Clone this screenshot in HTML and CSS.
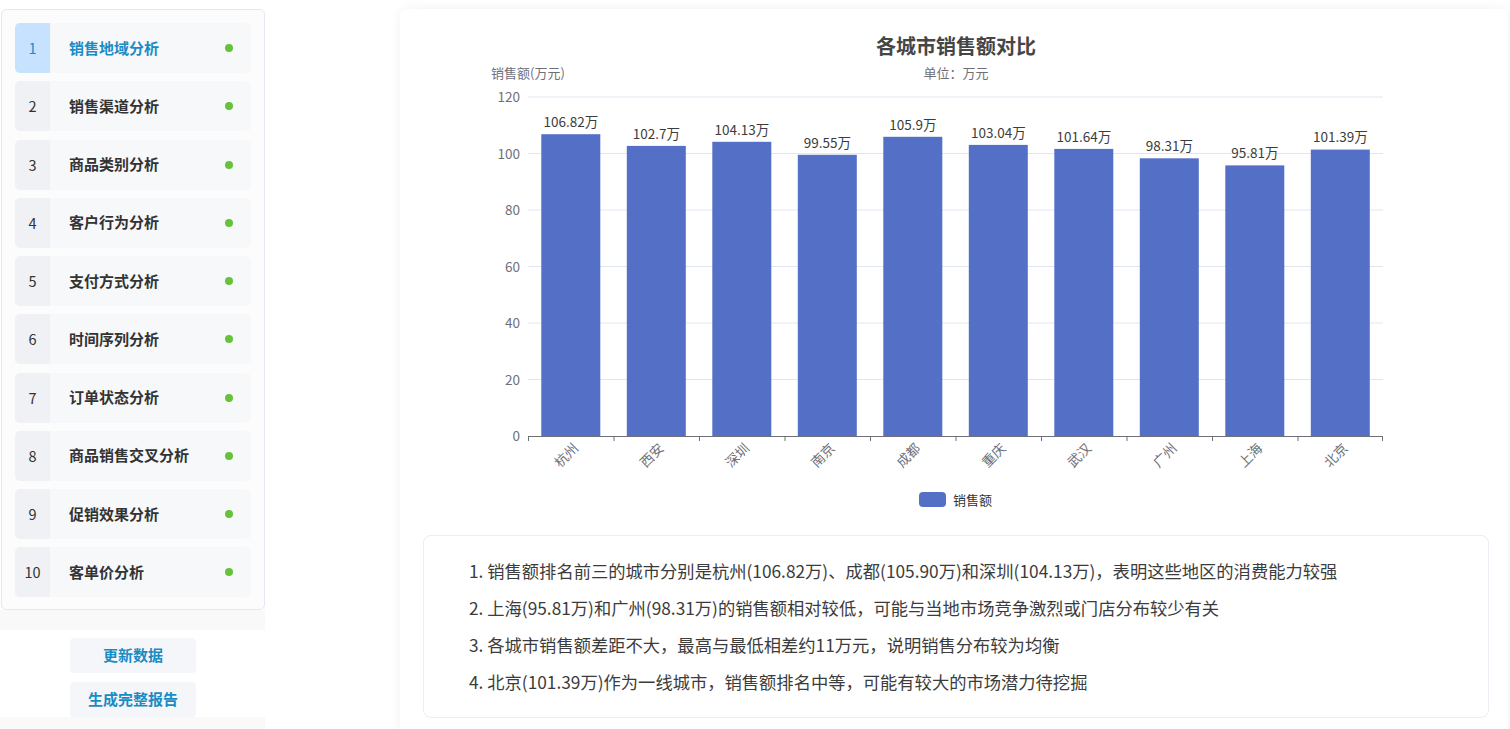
FILE: index.html
```html
<!DOCTYPE html>
<html lang="zh-CN">
<head>
<meta charset="utf-8">
<title>销售地域分析</title>
<link rel="stylesheet" href="styles.css">
</head>
<body>
<div class="page">
  <aside class="sidebar">
    <div class="nav-card">
      <div class="nav-item active"><span class="num">1</span><span class="label">销售地域分析</span><span class="dot"></span></div>
      <div class="nav-item"><span class="num">2</span><span class="label">销售渠道分析</span><span class="dot"></span></div>
      <div class="nav-item"><span class="num">3</span><span class="label">商品类别分析</span><span class="dot"></span></div>
      <div class="nav-item"><span class="num">4</span><span class="label">客户行为分析</span><span class="dot"></span></div>
      <div class="nav-item"><span class="num">5</span><span class="label">支付方式分析</span><span class="dot"></span></div>
      <div class="nav-item"><span class="num">6</span><span class="label">时间序列分析</span><span class="dot"></span></div>
      <div class="nav-item"><span class="num">7</span><span class="label">订单状态分析</span><span class="dot"></span></div>
      <div class="nav-item"><span class="num">8</span><span class="label">商品销售交叉分析</span><span class="dot"></span></div>
      <div class="nav-item"><span class="num">9</span><span class="label">促销效果分析</span><span class="dot"></span></div>
      <div class="nav-item"><span class="num">10</span><span class="label">客单价分析</span><span class="dot"></span></div>
    </div>
    <div class="side-strip"></div>
    <div class="actions">
      <button class="action-btn">更新数据</button>
      <button class="action-btn">生成完整报告</button>
    </div>
    <div class="side-strip"></div>
  </aside>

  <main class="panel">
    <svg class="chart" width="1108" height="517" viewBox="0 0 1108 517" xmlns="http://www.w3.org/2000/svg">
      <text x="556" y="36.5" class="c-title" text-anchor="middle" dominant-baseline="central">各城市销售额对比</text>
      <text x="556" y="63" class="c-sub" text-anchor="middle" dominant-baseline="central">单位：万元</text>
      <text x="128" y="63" class="c-axisname" text-anchor="middle" dominant-baseline="central">销售额(万元)</text>

      <g class="grid">
        <line x1="128" y1="88" x2="983" y2="88"/>
        <line x1="128" y1="144.5" x2="983" y2="144.5"/>
        <line x1="128" y1="201" x2="983" y2="201"/>
        <line x1="128" y1="257.5" x2="983" y2="257.5"/>
        <line x1="128" y1="314" x2="983" y2="314"/>
        <line x1="128" y1="370.5" x2="983" y2="370.5"/>
      </g>
      <g class="ylabels" text-anchor="end">
        <text x="120" y="87" dominant-baseline="central">120</text>
        <text x="120" y="143.5" dominant-baseline="central">100</text>
        <text x="120" y="200" dominant-baseline="central">80</text>
        <text x="120" y="256.5" dominant-baseline="central">60</text>
        <text x="120" y="313" dominant-baseline="central">40</text>
        <text x="120" y="369.5" dominant-baseline="central">20</text>
        <text x="120" y="426" dominant-baseline="central">0</text>
      </g>

      <g class="bars">
        <rect x="141.3" y="125.2" width="59" height="301.8"/>
        <rect x="226.8" y="136.9" width="59" height="290.1"/>
        <rect x="312.3" y="132.8" width="59" height="294.2"/>
        <rect x="397.8" y="145.8" width="59" height="281.2"/>
        <rect x="483.3" y="127.8" width="59" height="299.2"/>
        <rect x="568.8" y="135.9" width="59" height="291.1"/>
        <rect x="654.3" y="139.9" width="59" height="287.1"/>
        <rect x="739.8" y="149.3" width="59" height="277.7"/>
        <rect x="825.3" y="156.4" width="59" height="270.6"/>
        <rect x="910.8" y="140.6" width="59" height="286.4"/>
      </g>
      <g class="vlabels" text-anchor="middle">
        <text x="170.8" y="118">106.82万</text>
        <text x="256.3" y="130">102.7万</text>
        <text x="341.8" y="126">104.13万</text>
        <text x="427.3" y="139">99.55万</text>
        <text x="512.8" y="121">105.9万</text>
        <text x="598.3" y="129">103.04万</text>
        <text x="683.8" y="133">101.64万</text>
        <text x="769.3" y="142">98.31万</text>
        <text x="854.8" y="149">95.81万</text>
        <text x="940.3" y="133">101.39万</text>
      </g>

      <line class="axis" x1="128" y1="427.5" x2="983" y2="427.5"/>
      <g class="ticks">
        <line x1="128.5" y1="427" x2="128.5" y2="432"/>
        <line x1="214" y1="427" x2="214" y2="432"/>
        <line x1="299.5" y1="427" x2="299.5" y2="432"/>
        <line x1="385" y1="427" x2="385" y2="432"/>
        <line x1="470.5" y1="427" x2="470.5" y2="432"/>
        <line x1="556" y1="427" x2="556" y2="432"/>
        <line x1="641.5" y1="427" x2="641.5" y2="432"/>
        <line x1="727" y1="427" x2="727" y2="432"/>
        <line x1="812.5" y1="427" x2="812.5" y2="432"/>
        <line x1="898" y1="427" x2="898" y2="432"/>
        <line x1="982.5" y1="427" x2="982.5" y2="432"/>
      </g>
      <g class="xlabels" text-anchor="end">
        <text x="175" y="436" dominant-baseline="central" transform="rotate(-45 175 436)">杭州</text>
        <text x="260.5" y="436" dominant-baseline="central" transform="rotate(-45 260.5 436)">西安</text>
        <text x="346" y="436" dominant-baseline="central" transform="rotate(-45 346 436)">深圳</text>
        <text x="431.5" y="436" dominant-baseline="central" transform="rotate(-45 431.5 436)">南京</text>
        <text x="517" y="436" dominant-baseline="central" transform="rotate(-45 517 436)">成都</text>
        <text x="602.5" y="436" dominant-baseline="central" transform="rotate(-45 602.5 436)">重庆</text>
        <text x="688" y="436" dominant-baseline="central" transform="rotate(-45 688 436)">武汉</text>
        <text x="773.5" y="436" dominant-baseline="central" transform="rotate(-45 773.5 436)">广州</text>
        <text x="859" y="436" dominant-baseline="central" transform="rotate(-45 859 436)">上海</text>
        <text x="944.5" y="436" dominant-baseline="central" transform="rotate(-45 944.5 436)">北京</text>
      </g>

      <rect class="legend-box" x="519" y="483" width="27" height="15" rx="4"/>
      <text x="553" y="490.5" class="legend-text" dominant-baseline="central">销售额</text>
    </svg>

    <section class="insights">
      <p>1. 销售额排名前三的城市分别是杭州(106.82万)、成都(105.90万)和深圳(104.13万)，表明这些地区的消费能力较强</p>
      <p>2. 上海(95.81万)和广州(98.31万)的销售额相对较低，可能与当地市场竞争激烈或门店分布较少有关</p>
      <p>3. 各城市销售额差距不大，最高与最低相差约11万元，说明销售分布较为均衡</p>
      <p>4. 北京(101.39万)作为一线城市，销售额排名中等，可能有较大的市场潜力待挖掘</p>
    </section>
  </main>
</div>
</body>
</html>
```

FILE: styles.css
```css
* {
  box-sizing: border-box;
}

html, body {
  margin: 0;
  padding: 0;
  background: #ffffff;
  font-family: "Noto Sans CJK SC", "Noto Sans", sans-serif;
  color: #333333;
  overflow: hidden;
}

.page {
  display: grid;
  grid-template-columns: 264px 1108px;
  column-gap: 135px;
  padding-left: 1px;
  padding-top: 9px;
  height: 729px;
}

.sidebar {
  display: flex;
  flex-direction: column;
}

.nav-card {
  border: 1px solid #e6e7f0;
  border-radius: 5px;
  background: #fcfcfd;
  padding: 13px 13px 12px 13px;
  display: flex;
  flex-direction: column;
  gap: 8.25px;
}

.nav-item {
  display: flex;
  align-items: center;
  height: 50px;
  background: #f7f8fa;
  border-radius: 5px;
  overflow: hidden;
}

.nav-item .num {
  width: 35px;
  height: 100%;
  display: flex;
  align-items: center;
  justify-content: center;
  background: #eff1f5;
  font-size: 14.5px;
  color: #333333;
  padding-bottom: 1px;
}

.nav-item .label {
  flex: 1;
  padding-left: 19px;
  padding-bottom: 2px;
  font-size: 15px;
  font-weight: 600;
  color: #333333;
}

.nav-item .dot {
  width: 8px;
  height: 8px;
  border-radius: 50%;
  background: #67c23a;
  margin-right: 18px;
}

.nav-item.active .num {
  background: #c6e2ff;
  color: #1a8cc4;
}

.nav-item.active .label {
  color: #1a8cc4;
}

.side-strip {
  height: 20px;
  background: #f9f9fa;
  margin-left: -1px;
}

.actions {
  display: flex;
  flex-direction: column;
  align-items: center;
  gap: 9px;
  padding: 8px 0 0 0;
  height: 87px;
}

.action-btn {
  width: 126px;
  height: 35px;
  border: none;
  border-radius: 4px;
  background: #f4f6f9;
  color: #1a8cc4;
  font-family: "Noto Sans CJK SC", "Noto Sans", sans-serif;
  font-size: 15px;
  font-weight: 600;
  padding: 0 0 2px 0;
}

.panel {
  background: #ffffff;
  border-radius: 8px;
  box-shadow: 0 0 12px rgba(0, 0, 0, 0.06);
  padding: 0 20px 0 23px;
  display: flex;
  flex-direction: column;
  height: 740px;
}

.chart {
  display: block;
  margin-left: -23px;
  font-family: "Noto Sans CJK SC", "Noto Sans", sans-serif;
}

.c-title {
  font-size: 20px;
  font-weight: 700;
  fill: #464646;
}

.c-sub {
  font-size: 13px;
  fill: #6e7079;
}

.c-axisname {
  font-size: 13px;
  fill: #6e7079;
}

.grid line {
  stroke: #e0e6f1;
  stroke-width: 1;
}

.ylabels text {
  font-size: 13.5px;
  fill: #6e7079;
}

.bars rect {
  fill: #5470c6;
}

.vlabels text {
  font-size: 13.5px;
  fill: #3c3c3c;
}

.axis {
  stroke: #6e7079;
  stroke-width: 1;
}

.ticks line {
  stroke: #6e7079;
  stroke-width: 1;
}

.xlabels text {
  font-size: 13.5px;
  fill: #6e7079;
}

.legend-box {
  fill: #5470c6;
}

.legend-text {
  font-size: 13px;
  fill: #333333;
}

.insights {
  margin-top: 9px;
  width: 1066px;
  height: 183px;
  border: 1px solid #ebeef5;
  border-radius: 8px;
  padding: 16px 20px 0 45px;
}

.insights p {
  margin: 0;
  font-size: 17.3px;
  line-height: 37px;
  color: #3c3c3c;
  white-space: nowrap;
}
```
